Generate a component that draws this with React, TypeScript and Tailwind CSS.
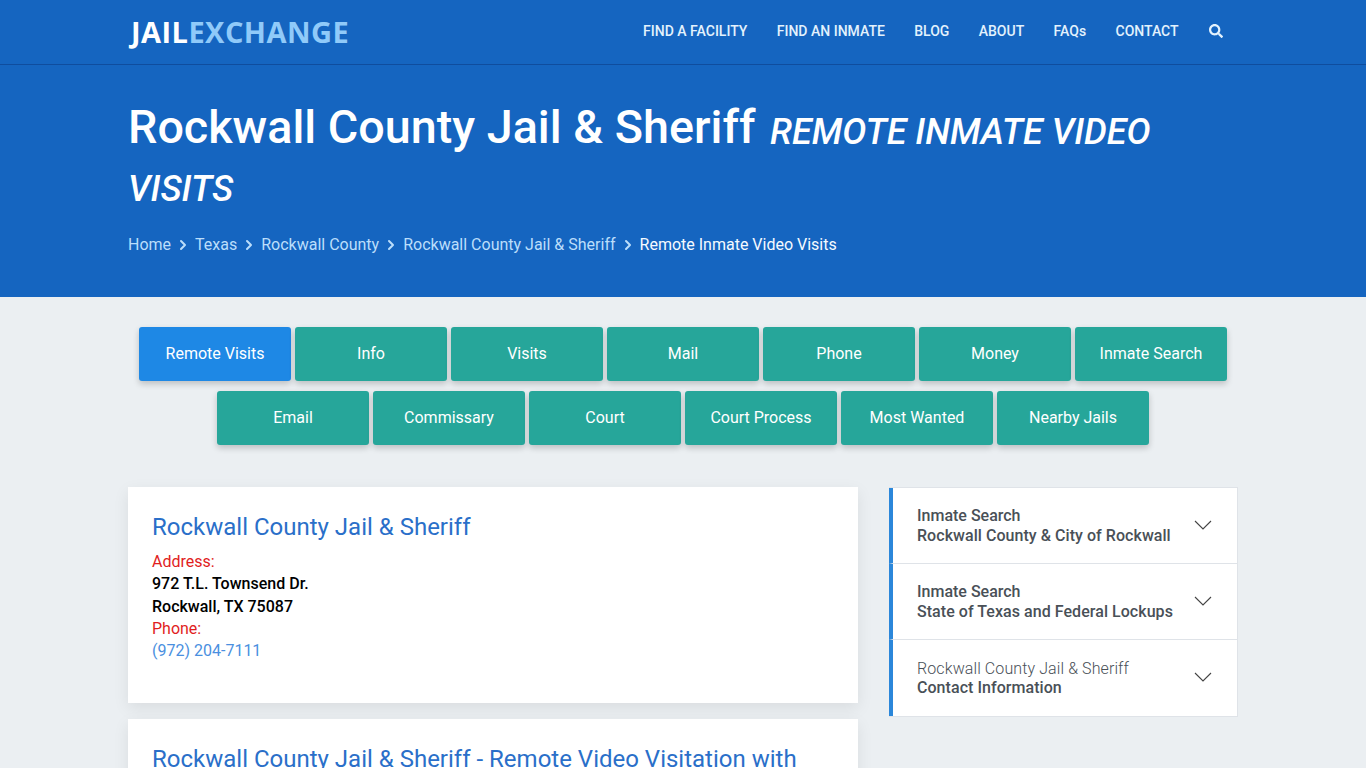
import React from 'react';
import { ChevronRight } from 'lucide-react';
import { FaSearch } from 'react-icons/fa';

const NAV_LINKS = ['FIND A FACILITY', 'FIND AN INMATE', 'BLOG', 'ABOUT', 'FAQs', 'CONTACT'];
const ROW_ONE = ['Remote Visits', 'Info', 'Visits', 'Mail', 'Phone', 'Money', 'Inmate Search'];
const ROW_TWO = ['Email', 'Commissary', 'Court', 'Court Process', 'Most Wanted', 'Nearby Jails'];
const CRUMBS = ['Home', 'Texas', 'Rockwall County', 'Rockwall County Jail & Sheriff'];

const TabButton: React.FC<{ label: string }> = ({ label }) => (
  <a
    className={`flex h-[54px] w-[152px] items-center justify-center rounded-[3px] text-base text-white shadow-[0_3px_6px_rgba(0,0,0,0.2)] ${
      label === 'Remote Visits' ? 'bg-[#1e88e5]' : 'bg-[#26a69a]'
    }`}
  >
    {label}
  </a>
);

const SideItem: React.FC<{ top: string; bottom: string; light?: boolean; className?: string }> = ({ top, bottom, light, className }) => (
  <div className={`flex h-[76px] items-center justify-between border-l-4 border-l-[#2b87da] pl-6 pr-[25px] text-base leading-[19.5px] text-[#495057] ${className ?? ''}`}>
    <div>
      <div className={light ? 'font-light tracking-[0.1px]' : 'font-medium'}>{top}</div>
      <div className="font-medium tracking-[0.05px]">{bottom}</div>
    </div>
    <svg className="mb-[2px]" width="18" height="10" viewBox="0 0 18 10" fill="none" stroke="#444" strokeWidth="1.1">
      <path d="M1 1l8 8 8-8" />
    </svg>
  </div>
);

export default function App() {
  return (
    <div className="h-screen overflow-hidden bg-[#ebeff2] font-['Roboto',sans-serif]">
      {/* Navbar */}
      <nav className="h-[65px] border-b border-[#0f4d9e] bg-[#1565c0] shadow-[0_1px_3px_rgba(0,0,0,0.2)]">
        <div className="mx-auto flex h-16 w-[1110px] items-center justify-between">
          <a className="ml-[3px] font-['Open_Sans',sans-serif] text-[29px] font-bold tracking-[0.45px] text-white">
            JAIL<span className="text-[#90caf9]">EXCHANGE</span>
          </a>
          <div className="mr-[15px] flex -translate-y-px items-center gap-[29.4px] text-sm font-medium text-[#e3f2fd]">
            {NAV_LINKS.map(link => (
              <a key={link} className="-translate-x-px">{link}</a>
            ))}
            <FaSearch size={14} />
          </div>
        </div>
      </nav>

      {/* Hero */}
      <header className="h-[232px] bg-[#1565c0]">
        <div className="mx-auto w-[1110px] pt-[34px]">
          <h1 className="text-[46.7px] font-medium leading-[57px] text-white">
            Rockwall County Jail &amp; Sheriff{' '}
            <small className="relative top-px ml-[3px] text-[36px] font-medium uppercase leading-none italic">Remote Inmate Video Visits</small>
          </h1>
          <div className="mt-[20px] flex items-center text-base text-[#bbdefb]">
            {CRUMBS.map(crumb => (
              <React.Fragment key={crumb}>
                <a>{crumb}</a>
                <ChevronRight size={16} strokeWidth={3} className="mx-1 text-[#bbdefb]" />
              </React.Fragment>
            ))}
            <span className="text-[#f5faff]">Remote Inmate Video Visits</span>
          </div>
        </div>
      </header>

      {/* Tabs */}
      <div className="mx-auto flex w-[1110px] flex-col items-center gap-[10px] pt-[30px]">
        <div className="flex gap-1">
          {ROW_ONE.map(label => (
            <TabButton key={label} label={label} />
          ))}
        </div>
        <div className="flex gap-1">
          {ROW_TWO.map(label => (
            <TabButton key={label} label={label} />
          ))}
        </div>
      </div>

      {/* Main */}
      <div className="mx-auto mt-[42px] flex w-[1110px] items-start justify-between">
        <div className="flex w-[730px] flex-col gap-4">
          <section className="h-[216px] bg-white px-6 pt-[23px] shadow-[0_5px_15px_rgba(0,0,0,0.08)]">
            <h2 className="text-2xl leading-[35px] text-[#2a6fc9]">Rockwall County Jail &amp; Sheriff</h2>
            <div className="mt-[6px] text-base leading-[22.25px]">
              <div className="text-[#e11d1d]">Address:</div>
              <div className="font-medium text-black">972 T.L. Townsend Dr.</div>
              <div className="font-medium text-black">Rockwall, TX 75087</div>
              <div className="text-[#e11d1d]">Phone:</div>
              <a className="text-[#4a8fe0]">(972) 204-7111</a>
            </div>
          </section>
          <section className="h-[300px] bg-white px-6 pt-[23px] shadow-[0_5px_15px_rgba(0,0,0,0.08)]">
            <h2 className="text-2xl leading-[35px] text-[#2a6fc9]">Rockwall County Jail &amp; Sheriff - Remote Video Visitation with</h2>
          </section>
        </div>
        <aside className="w-[349px] border border-l-0 border-[#dfe3e8] bg-white">
          <SideItem top="Inmate Search" bottom="Rockwall County & City of Rockwall" className="border-b border-b-[#dfe3e8]" />
          <SideItem top="Inmate Search" bottom="State of Texas and Federal Lockups" className="border-b border-b-[#dfe3e8]" />
          <SideItem top="Rockwall County Jail & Sheriff" bottom="Contact Information" light />
        </aside>
      </div>
    </div>
  );
}
